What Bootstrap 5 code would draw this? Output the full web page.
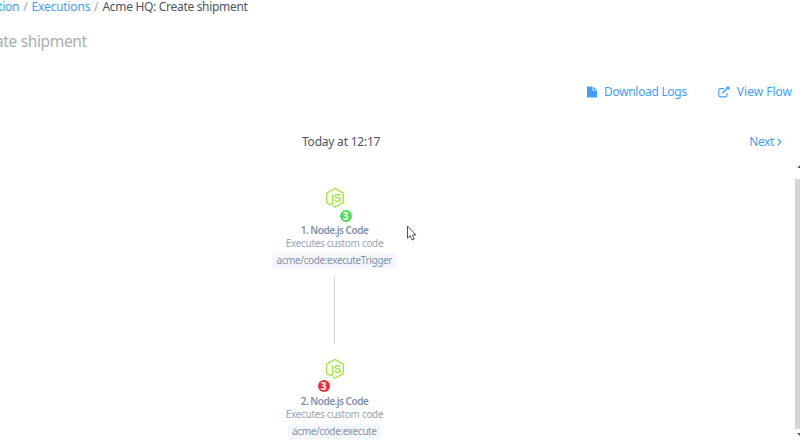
<!DOCTYPE html>
<html lang="en">
<head>
<meta charset="utf-8">
<meta name="viewport" content="width=device-width, initial-scale=1">
<title>Execution</title>
<link href="https://cdn.jsdelivr.net/npm/bootstrap@5.3.0/dist/css/bootstrap.min.css" rel="stylesheet">
<style>
body{width:800px;height:440px;background:#fff;color:#4c5565;font:12px/18px "Noto Sans","Open Sans",sans-serif;white-space:nowrap}
a{color:#409eff;text-decoration:none}
svg{display:block;flex:none}
.crumbs{height:29px;margin:-2px 0 0 -2px}
.crumbs a{letter-spacing:-.2px}
.crumbs .sep{color:#9aa3ae;width:12.3px;text-align:center}
.crumbs .here{letter-spacing:-.31px}
.page-title{height:50px;color:#a9adb5;font-size:15.5px;line-height:28px;margin-left:-5px;letter-spacing:-.35px}
.tools{height:30px;padding-right:8px;gap:31px}
.tools a{gap:7px}
.dl{letter-spacing:-.31px}
.pager{height:18px;margin-top:26px;padding:0 18px 0 302px}
.stamp{letter-spacing:-.22px}
.next{letter-spacing:-.38px;gap:3px}
.flow{width:669px;margin-top:36px;height:254px}
.step{height:90px}
.logo-wrap{width:20px;height:22px}
.count{width:12px;height:12px;left:15px;top:23px;font-size:10px;line-height:12px;background:#52dd58;color:#fff}
.count.bad{left:-7px;top:22px;background:#ea3037}
.step-name{margin-top:15px;line-height:13px;font-weight:600;font-size:10px;letter-spacing:-.5px;color:#8090ae}
.step-note{line-height:13px;font-size:10px;letter-spacing:-.32px;color:#98a4b8}
.step-tag{height:16px;line-height:15px;margin-top:3px;padding:0 5px 0 4.5px;background:#f4f7fe;border-radius:4px;font-size:10px;letter-spacing:-.38px;color:#8492a8}
.link-line{width:1px;height:67px;background:#d2d5db}
.second{padding-top:14px}
.scroller{right:0;top:163px;width:5px;height:277px}
.thumb{margin-top:8px;height:250px;background:#d5d5d5}
.pointer{left:406px;top:225px}
</style>
</head>
<body class="overflow-hidden position-relative">
<nav class="crumbs d-flex"><a href="#">tion</a><span class="sep">/</span><a href="#">Executions</a><span class="sep">/</span><span class="here">Acme HQ: Create shipment</span></nav>
<h1 class="page-title mb-0 fw-normal">ate shipment</h1>
<div class="tools d-flex justify-content-end align-items-center">
  <a href="#" class="d-flex align-items-center dl"><svg width="10" height="12" viewBox="0 0 10 12" fill="#409eff"><path d="M0 1Q0 .5.6.5H5.5V4.5H10V11Q10 11.5 9.4 11.5H.6Q0 11.5 0 11Z"/><path d="M6.3.7 9.8 3.8H6.3Z"/></svg>Download Logs</a>
  <a href="#" class="d-flex align-items-center"><svg width="12" height="12" viewBox="0 0 12 12" fill="none" stroke="#409eff" stroke-width="1.1"><path d="M6.3 2.6H2.4Q.8 2.6.8 4.2V9.3Q.8 10.9 2.4 10.9H7.4Q9 10.9 9 9.3V7"/><path d="M4.4 7.2 10 1.8" stroke-width="1.5"/><path d="M7.7.6H11.5V4.4Z" fill="#409eff" stroke="none"/></svg>View Flow</a>
</div>
<div class="pager d-flex justify-content-between">
  <span class="stamp">Today at 12:17</span>
  <a href="#" class="next d-flex align-items-center">Next<svg width="5" height="8" viewBox="0 0 5 8" fill="none" stroke="#409eff" stroke-width="1.2"><path d="M.8.8 4 4 .8 7.2"/></svg></a>
</div>
<svg class="d-none"><symbol id="node" viewBox="0 0 20 22"><path d="M7.7 18.8 10 20.1 18.3 15.5V6.2L10 1.4 1.7 6.2V15.5L4.7 17.1Q7.7 18.2 7.7 15.4V7.3M15.1 9Q14.7 7.5 12.7 7.5 10.3 7.5 10.3 9.2 10.3 10.6 12.8 10.9 15.4 11.2 15.4 12.8 15.4 14.5 12.8 14.5 10.3 14.5 10 12.7" fill="none" stroke="#9ee53b" stroke-width="1.3"/></symbol></svg>
<main class="flow d-flex flex-column align-items-center">
  <section class="step d-flex flex-column align-items-center">
    <div class="logo-wrap position-relative"><svg width="20" height="22"><use href="#node"/></svg><span class="count position-absolute rounded-circle text-center fw-bold">3</span></div>
    <div class="step-name">1. Node.js Code</div>
    <div class="step-note">Executes custom code</div>
    <div class="step-tag">acme/code:executeTrigger</div>
  </section>
  <div class="link-line flex-shrink-0"></div>
  <section class="step second d-flex flex-column align-items-center flex-shrink-0">
    <div class="logo-wrap position-relative"><svg width="20" height="22"><use href="#node"/></svg><span class="count bad position-absolute rounded-circle text-center fw-bold">3</span></div>
    <div class="step-name">2. Node.js Code</div>
    <div class="step-note">Executes custom code</div>
    <div class="step-tag">acme/code:execute</div>
  </section>
</main>
<div class="scroller position-absolute"><svg width="5" height="8" viewBox="0 0 5 8"><path d="M2.5 5 4.5 2.5H5V5Z" fill="#555"/></svg><div class="thumb"></div><svg width="5" height="8" viewBox="0 0 5 8"><path d="M2 4H5V7Z" fill="#555"/></svg></div>
<svg class="pointer position-absolute" width="12" height="17" viewBox="0 0 12 17"><path d="M1.5 1V13.2L4.2 10.7 6.1 15 8.3 14 6.5 9.9H10Z" fill="#fff" stroke="#50505c"/></svg>
<script src="https://cdn.jsdelivr.net/npm/bootstrap@5.3.0/dist/js/bootstrap.bundle.min.js"></script>
</body>
</html>
